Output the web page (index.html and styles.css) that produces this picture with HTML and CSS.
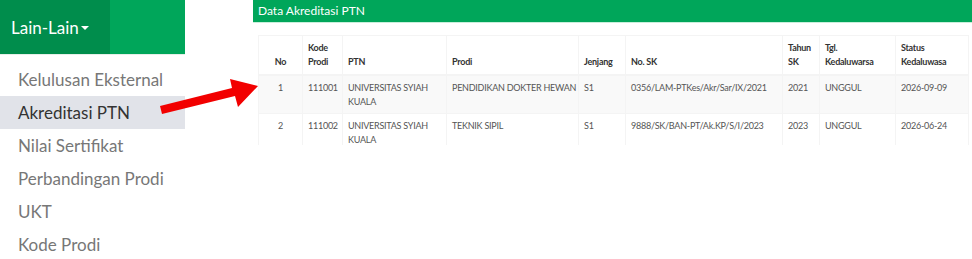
FILE: index.html
```html
<!DOCTYPE html>
<html>
<head>
    <title>Data Akreditasi PTN</title>
    <link rel="stylesheet" href="styles.css">
</head>
<body>
    <div class="page">
        <div class="sidebar">
            <div class="navbar">
                <div class="dropdown-toggle">Lain-Lain<span class="caret"></span></div>
            </div>
            <ul class="menu">
                <li>Kelulusan Eksternal</li>
                <li class="active">Akreditasi PTN</li>
                <li>Nilai Sertifikat</li>
                <li>Perbandingan Prodi</li>
                <li>UKT</li>
                <li>Kode Prodi</li>
            </ul>
        </div>

        <div class="content">
            <div class="box-header">Data Akreditasi PTN</div>
            <div class="table-wrap">
                <table class="data-table">
                    <colgroup>
                        <col style="width: 44px">
                        <col style="width: 40px">
                        <col style="width: 104px">
                        <col style="width: 132px">
                        <col style="width: 47px">
                        <col style="width: 157px">
                        <col style="width: 37px">
                        <col style="width: 76px">
                        <col style="width: 73px">
                    </colgroup>
                    <thead>
                        <tr>
                            <th class="center">No</th>
                            <th>Kode<br>Prodi</th>
                            <th>PTN</th>
                            <th>Prodi</th>
                            <th>Jenjang</th>
                            <th>No. SK</th>
                            <th>Tahun<br>SK</th>
                            <th>Tgl.<br>Kedaluwarsa</th>
                            <th>Status<br>Kedaluwasa</th>
                        </tr>
                    </thead>
                    <tbody>
                        <tr>
                            <td class="center">1</td>
                            <td>111001</td>
                            <td class="wrap">UNIVERSITAS SYIAH KUALA</td>
                            <td>PENDIDIKAN DOKTER HEWAN</td>
                            <td>S1</td>
                            <td>0356/LAM-PTKes/Akr/Sar/IX/2021</td>
                            <td>2021</td>
                            <td>UNGGUL</td>
                            <td>2026-09-09</td>
                        </tr>
                        <tr>
                            <td class="center">2</td>
                            <td>111002</td>
                            <td class="wrap">UNIVERSITAS SYIAH KUALA</td>
                            <td>TEKNIK SIPIL</td>
                            <td>S1</td>
                            <td>9888/SK/BAN-PT/Ak.KP/S/I/2023</td>
                            <td>2023</td>
                            <td>UNGGUL</td>
                            <td>2026-06-24</td>
                        </tr>
                    </tbody>
                </table>
            </div>
        </div>
    </div>

    <!-- penanda panah merah -->
    <svg class="arrow" width="110" height="40" viewBox="0 0 110 40">
        <polygon points="2,30 74,12 72,3 100,10 80,31 77,20 4,38" fill="#f20000"/>
    </svg>
</body>
</html>
```

FILE: styles.css
```css
body {
    margin: 0;
    font-family: 'Lato', 'Open Sans', sans-serif;
    background: #fff;
    color: #333;
}

.page {
    display: flex;
    gap: 68px;
    height: 259px;
    overflow: hidden;
}

.sidebar {
    width: 185px;
    flex-shrink: 0;
}

.navbar {
    height: 54px;
    background: #00a65a;
    border-bottom: 1px solid #e6efe9;
    display: flex;
}

.dropdown-toggle {
    width: 99px;
    padding-left: 11px;
    background: #008d4c;
    color: #fff;
    font-size: 17px;
    display: flex;
    align-items: center;
}

.caret {
    display: inline-block;
    margin-left: 2px;
    margin-top: 2px;
    border-top: 4px solid #fff;
    border-left: 4px solid transparent;
    border-right: 4px solid transparent;
}

.menu {
    list-style: none;
    margin: 8px 0 0;
    padding: 0;
}

.menu li {
    height: 33px;
    line-height: 33px;
    padding-left: 18px;
    font-size: 17px;
    color: #777;
    white-space: nowrap;
}

.menu li.active {
    background: #e1e3e9;
    color: #333;
}

.content {
    flex: 1;
}

.box-header {
    height: 23px;
    line-height: 22px;
    background: #00a65a;
    border-bottom: 1px solid #c9eedb;
    color: #fff;
    font-size: 12px;
    padding-left: 5px;
    box-sizing: border-box;
}

.table-wrap {
    margin: 12px 4px 0 5px;
    height: 110px;
    overflow: hidden;
}

.data-table {
    width: 710px;
    table-layout: fixed;
    border-collapse: collapse;
    font-size: 9px;
    letter-spacing: -0.25px;
    color: #555;
}

.data-table th,
.data-table td {
    border: 1px solid #f4f4f4;
    padding: 5px 5px 4px;
    line-height: 14px;
    text-align: left;
    vertical-align: top;
}

.data-table th {
    color: #333;
    font-weight: bold;
    vertical-align: bottom;
    padding-bottom: 5px;
    border-bottom: 2px solid #f4f4f4;
}

.data-table td {
    white-space: nowrap;
}

.data-table td.wrap {
    white-space: normal;
}

.data-table tbody tr:nth-child(odd) {
    background: #f9f9f9;
}

.data-table .center {
    text-align: center;
}

.arrow {
    position: absolute;
    left: 158px;
    top: 76px;
}
```
